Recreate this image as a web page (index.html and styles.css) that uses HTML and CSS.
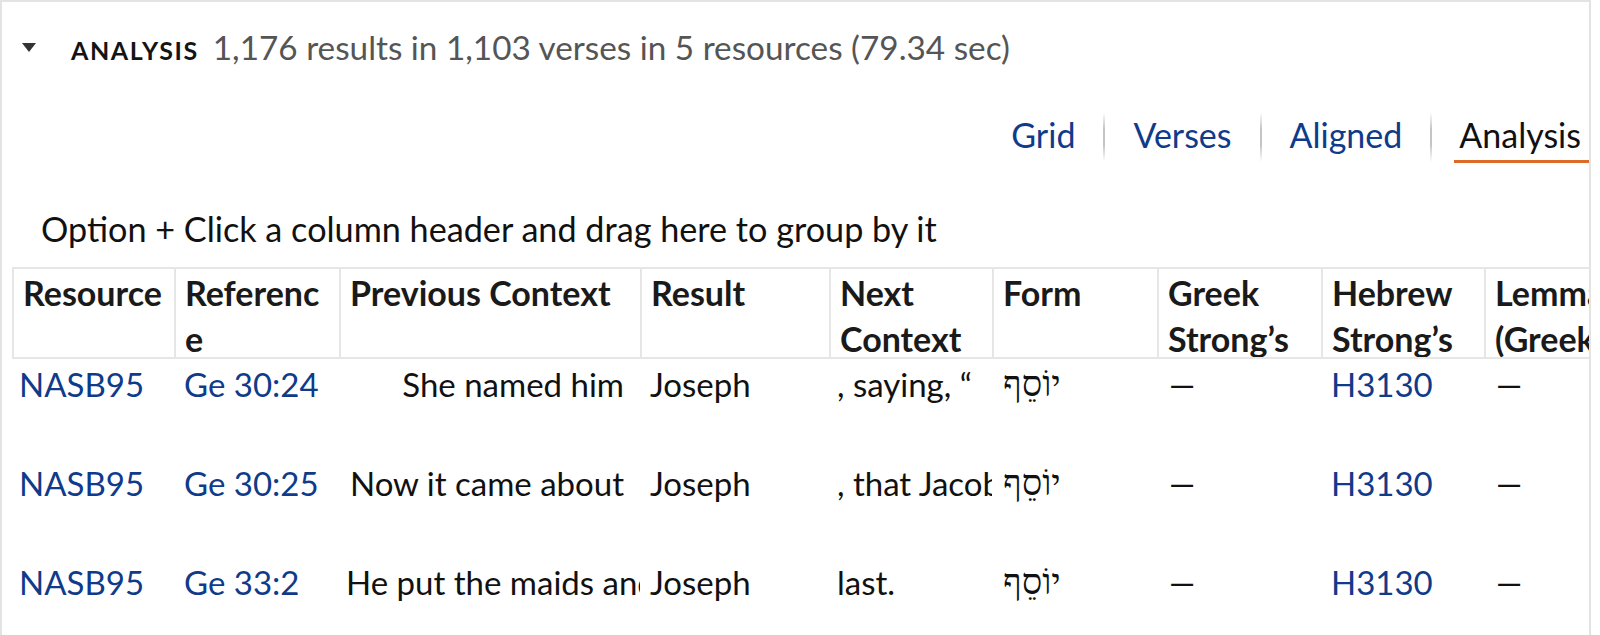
FILE: index.html
```html
<!DOCTYPE html>
<html lang="en">
<head>
<meta charset="utf-8">
<title>Analysis</title>
<link rel="stylesheet" href="styles.css">
</head>
<body>
<div class="panel">
  <div class="summary">
    <svg class="caret" width="14" height="9" viewBox="0 0 14 9"><path d="M0 0H14L7 9Z" fill="#333"/></svg>
    <span class="title">ANALYSIS</span>
    <span class="stats">1,176 results in 1,103 verses in 5 resources (79.34 sec)</span>
  </div>
  <nav class="tabs">
    <a class="tab">Grid</a>
    <span class="sep"></span>
    <a class="tab">Verses</a>
    <span class="sep"></span>
    <a class="tab">Aligned</a>
    <span class="sep"></span>
    <a class="tab active">Analysis</a>
  </nav>
  <div class="groupby">Option + Click a column header and drag here to group by it</div>
  <div class="table">
    <div class="th">Resource</div>
    <div class="th">Reference</div>
    <div class="th">Previous Context</div>
    <div class="th">Result</div>
    <div class="th">Next Context</div>
    <div class="th">Form</div>
    <div class="th">Greek Strong’s</div>
    <div class="th">Hebrew Strong’s</div>
    <div class="th">Lemma (Greek)</div>

    <div class="td link first">NASB95</div>
    <div class="td link">Ge 30:24</div>
    <div class="td prev right">She named him</div>
    <div class="td">Joseph</div>
    <div class="td next">, saying, “</div>
    <div class="td heb" dir="rtl">יוֹסֵף</div>
    <div class="td dash">—</div>
    <div class="td link">H3130</div>
    <div class="td dash">—</div>

    <div class="td link first">NASB95</div>
    <div class="td link">Ge 30:25</div>
    <div class="td prev right">Now it came about</div>
    <div class="td">Joseph</div>
    <div class="td next">, that Jacob said to Laban,</div>
    <div class="td heb" dir="rtl">יוֹסֵף</div>
    <div class="td dash">—</div>
    <div class="td link">H3130</div>
    <div class="td dash">—</div>

    <div class="td link first">NASB95</div>
    <div class="td link">Ge 33:2</div>
    <div class="td prev">He put the maids and their children first,</div>
    <div class="td">Joseph</div>
    <div class="td next">last.</div>
    <div class="td heb" dir="rtl">יוֹסֵף</div>
    <div class="td dash">—</div>
    <div class="td link">H3130</div>
    <div class="td dash">—</div>
  </div>
</div>
</body>
</html>
```

FILE: styles.css
```css
* { box-sizing: border-box; }

html, body {
  margin: 0;
  padding: 0;
  background: #fff;
}

body {
  font-family: Lato, "Liberation Sans", sans-serif;
  color: #111;
}

.panel {
  width: 1591px;
  height: 635px;
  border: 2px solid #e3e3e3;
  border-bottom: none;
  overflow: hidden;
}

.summary {
  display: flex;
  align-items: baseline;
  height: 100px;
  padding: 21px 0 0 20px;
  line-height: 48px;
}

.caret {
  flex: none;
  align-self: flex-start;
  margin-top: 20px;
}

.title {
  margin-left: 35px;
  font-size: 25px;
  font-weight: 700;
  letter-spacing: 1.6px;
  color: #141414;
}

.stats {
  margin-left: 14px;
  font-size: 33.3px;
  color: #555;
}

.tabs {
  display: flex;
  justify-content: flex-end;
  align-items: flex-start;
  height: 63px;
}

.tab {
  padding: 13px 6px 5px;
  font-size: 34px;
  line-height: 40px;
  color: #0f3b8a;
  border-bottom: 3px solid transparent;
}

.tab.active {
  color: #111;
  padding-left: 5px;
  padding-right: 8px;
  border-bottom-color: #dd6a28;
}

.sep {
  width: 2px;
  height: 50px;
  margin: 10px 22px 0;
  background: linear-gradient(to bottom, rgba(200,200,200,0), #c4c4c4 35%, #c4c4c4 65%, rgba(200,200,200,0));
}

.groupby {
  height: 102px;
  padding: 41px 0 0 39px;
  font-size: 34.2px;
  line-height: 46px;
  color: #111;
}

.table {
  display: grid;
  grid-template-columns: 162px 165px 301px 189px 163px 165px 164px 163px 200px;
  margin-left: 10px;
  width: max-content;
}

.th {
  height: 92px;
  padding: 1px 6px 0 9px;
  border-top: 2px solid #e6e6e6;
  border-bottom: 2px solid #e6e6e6;
  border-left: 2px solid #e6e6e6;
  font-size: 34px;
  font-weight: 700;
  line-height: 46px;
  color: #1a1a1a;
  overflow: hidden;
  overflow-wrap: anywhere;
}

.td {
  height: 99px;
  padding: 3px 6px 0 10px;
  font-size: 33px;
  line-height: 44px;
  white-space: nowrap;
  overflow: hidden;
  color: #111;
}

.td.first { padding-left: 7px; }

.link { color: #0f3b8a; }

.prev { padding-left: 7px; }
.prev.right {
  text-align: right;
  padding-right: 16px;
}

.next { padding-left: 8px; padding-right: 4px; }

.heb {
  text-align: left;
  padding-left: 11px;
  font-family: "Liberation Serif", "DejaVu Sans", serif;
  font-size: 36px;
}

.dash { padding-left: 12px; }
```
